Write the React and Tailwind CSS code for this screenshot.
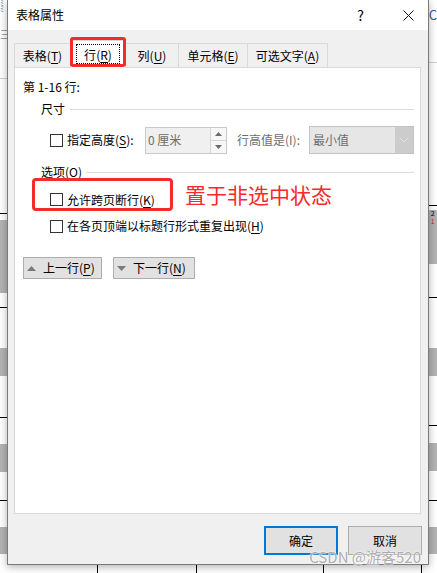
import React from 'react';

// Underlined access-key letter, like Windows dialogs draw it
const Key = ({ children }) => (
  <span className="underline underline-offset-[2px] decoration-1">{children}</span>
);

const Checkbox = () => (
  <span className="block w-[13px] h-[13px] shrink-0 border border-[#333333] bg-white" />
);

const tabs = [
  { label: '表格', key: 'T', w: 'w-[57px]' },
  { label: '行', key: 'R', w: 'w-[56px]', active: true },
  { label: '列', key: 'U', w: 'w-[54px]' },
  { label: '单元格', key: 'E', w: 'w-[70px]' },
  { label: '可选文字', key: 'A', w: 'w-[81px]' },
];

// document strips peeking out beside the dialog
const leftBands = [
  'h-px bg-[#cfcfcf]',
  'h-[134px]',
  'h-px bg-black',
  'h-[6px]',
  'h-[73px] bg-[#b3b3b3]',
  'h-[14px]',
  'h-px bg-black',
  'h-[40px]',
  'h-[28px] bg-[#b3b3b3]',
  'h-[41px]',
  'h-px bg-black',
  'h-[26px]',
  'h-[28px] bg-[#b3b3b3]',
  'h-[28px]',
  'h-px bg-black',
  'h-[26px]',
  'h-[27px] bg-[#b3b3b3]',
];

const rightTop = ['h-px bg-[#cfcfcf]', 'h-[142px]', 'h-px bg-black', 'h-[4px]'];

const rightBottom = [
  'h-[33px]',
  'h-px bg-black',
  'h-[50px]',
  'h-[28px] bg-[#b3b3b3]',
  'h-[49px]',
  'h-px bg-black',
  'h-[17px]',
  'h-[28px] bg-[#b3b3b3]',
  'h-[29px]',
  'h-px bg-black',
  'h-[26px]',
  'h-[27px] bg-[#b3b3b3]',
];

function SpinBox() {
  return (
    <div className="flex w-[82px] h-[27px] border border-[#c9c9c9] bg-[#f0f0f0]">
      <span className="flex-1 flex items-center pl-[2px] text-[#6d6d6d]">0 厘米</span>
      <div className="w-[16px] flex flex-col border-l border-[#d6d6d6]">
        <span className="flex-1 flex items-center justify-center border-b border-[#d6d6d6] bg-[#f7f7f7]">
          <svg width="7" height="4" viewBox="0 0 7 4"><path d="M0 4 L3.5 0 L7 4 Z" fill="#6a6a6a" /></svg>
        </span>
        <span className="flex-1 flex items-center justify-center bg-[#f7f7f7]">
          <svg width="7" height="4" viewBox="0 0 7 4"><path d="M0 0 L3.5 4 L7 0 Z" fill="#6a6a6a" /></svg>
        </span>
      </div>
    </div>
  );
}

function SelectBox() {
  return (
    <div className="flex w-[105px] h-[28px] border border-[#c4c4c4] bg-[#e6e6e6]">
      <span className="flex-1 flex items-center pl-[3px] text-[#6d6d6d]">最小值</span>
      <span className="w-[18px] flex items-center justify-center bg-[#cccccc]">
        <svg width="10" height="6" viewBox="0 0 10 6">
          <path d="M0.5 0.5 L5 5 L9.5 0.5" fill="none" stroke="#e2e2e2" strokeWidth="1" />
        </svg>
      </span>
    </div>
  );
}

function GroupTitle({ children, lineGap }) {
  return (
    <div className="flex items-center h-[14px] pl-[26px] pr-[6px]">
      <span className="leading-[14px]">{children}</span>
      <span className={`flex-1 h-px bg-[#dcdcdc] ${lineGap}`} />
    </div>
  );
}

function NavButton({ up, children, w }) {
  return (
    <button className={`flex items-center h-[22px] ${w} border border-[#adadad] bg-[#e1e1e1] pl-[3px] text-[12px]`}>
      <svg width="9" height="5" viewBox="0 0 9 5" className="mr-[7px]">
        {up ? <path d="M0 5 L4.5 0 L9 5 Z" fill="#7a7a7a" /> : <path d="M0 0 L4.5 5 L9 0 Z" fill="#7a7a7a" />}
      </svg>
      {children}
    </button>
  );
}

export default function App() {
  return (
    <div className="relative w-[437px] h-[573px] overflow-hidden bg-white text-[12px] text-black font-['Noto_Sans_CJK_SC',sans-serif]">
      {/* Word document behind the dialog */}
      <div className="flex h-full">
        <div className="w-[7px] flex flex-col">
          <div className="h-[12px] overflow-hidden text-[8px] leading-[6px] text-[#3f73b5]">ﾐﾐ</div>
          <div className="h-[16px]" />
          <div className="h-[12px] overflow-hidden text-[11px] leading-[12px] text-[#8a8a8a]">三</div>
          <div className="h-[38px]" />
          {leftBands.map((c, i) => (
            <div key={i} className={c} />
          ))}
        </div>
        <div className="w-[422px] flex flex-col">
          <div className="flex-1" />
          <div className="h-[8px] flex">
            <div className="w-[90px]" />
            <div className="w-px bg-black" />
            <div className="w-[98px]" />
            <div className="w-px bg-black" />
            <div className="w-[126px]" />
            <div className="w-px bg-black" />
            <div className="w-[97px]" />
            <div className="w-px bg-black" />
          </div>
        </div>
        <div className="flex-1 flex flex-col">
          <div className="h-[8px]" />
          <div className="h-[13px] overflow-hidden text-[13px] leading-[13px] text-[#2f5f9e] pl-[1px]">C</div>
          <div className="h-[41px]" />
          {rightTop.map((c, i) => (
            <div key={i} className={c} />
          ))}
          <div className="h-[54px] bg-[#b3b3b3] pl-[3px] text-[7px] leading-[7px]">
            <div className="h-[8px] overflow-hidden">2</div>
            <div className="h-[8px] overflow-hidden text-[#d42020]">1</div>
          </div>
          {rightBottom.map((c, i) => (
            <div key={i} className={c} />
          ))}
        </div>
      </div>

      {/* 表格属性 dialog */}
      <div className="absolute left-[7px] top-0 w-[422px] h-[565px] flex flex-col border-x border-b border-[#7a7a7a] bg-[#f0f0f0] shadow-[0_2px_8px_rgba(0,0,0,0.3)]">
        <div className="h-[30px] shrink-0 flex items-center bg-white pl-[8px]">
          <span>表格属性</span>
          <div className="ml-auto flex items-center gap-[6px]">
            <span className="w-[40px] text-center text-[14px] pr-[3px]">?</span>
            <span className="w-[40px] flex justify-center">
              <svg width="11" height="11" viewBox="0 0 11 11">
                <path d="M0.5 0.5 L10.5 10.5 M10.5 0.5 L0.5 10.5" stroke="#111" strokeWidth="1" />
              </svg>
            </span>
          </div>
        </div>

        <div className="flex flex-col pt-[10px]">
          <div className="flex items-end h-[27px] pl-[6px]">
            {tabs.map((t, i) =>
              t.active ? (
                <div
                  key={t.key}
                  className={`relative z-10 -ml-px -mb-px h-[28px] ${t.w} flex items-center justify-center bg-white border-x border-t border-[#d9d9d9]`}
                >
                  <span className="absolute left-[5px] top-[3px] right-[5px] bottom-[4px] border border-dotted border-black" />
                  <span>
                    {t.label}(<Key>{t.key}</Key>)
                  </span>
                  <span className="absolute -left-px -right-px -top-[4px] bottom-px border-[3px] border-[#f52a2a] rounded-[3px]" />
                </div>
              ) : (
                <div
                  key={t.key}
                  className={`${i ? '-ml-px' : ''} h-[24px] ${t.w} flex items-center justify-center border-x border-t border-[#d9d9d9] bg-[#f0f0f0]`}
                >
                  {t.label}(<Key>{t.key}</Key>)
                </div>
              )
            )}
          </div>

          <div className="ml-[6px] w-[407px] h-[447px] flex flex-col border border-[#d9d9d9] bg-white">
            <div className="mt-[12px] h-[14px] leading-[14px] pl-[8px]">第 1-16 行:</div>

            <div className="mt-[8px]">
              <GroupTitle lineGap="ml-[5px]">尺寸</GroupTitle>
            </div>

            <div className="mt-[10px] flex items-center pl-[35px]">
              <Checkbox />
              <span className="ml-[4px] w-[78px]">
                指定高度(<Key>S</Key>):
              </span>
              <SpinBox />
              <span className="ml-[10px] w-[72px] text-[#6d6d6d]">行高值是(I):</span>
              <SelectBox />
            </div>

            <div className="mt-[11px]">
              <GroupTitle lineGap="ml-[4px]">
                选项(<Key>O</Key>)
              </GroupTitle>
            </div>

            <div className="-mt-px flex items-center">
              <div className="ml-[17px] w-[141px] h-[33px] flex items-center pl-[15px] pt-[10px] border-[3px] border-[#f52a2a] rounded-[4px]">
                <Checkbox />
                <span className="ml-[4px] leading-[14px]">
                  允许跨页断行(<Key>K</Key>)
                </span>
              </div>
              <span className="ml-[12px] text-[21px] leading-none text-[#f52a2a]">置于非选中状态</span>
            </div>

            <div className="mt-[7px] h-[16px] flex items-center pl-[35px]">
              <Checkbox />
              <span className="ml-[4px]">
                在各页顶端以标题行形式重复出现(<Key>H</Key>)
              </span>
            </div>

            <div className="mt-[23px] flex items-center pl-[8px] gap-[11px]">
              <NavButton up w="w-[79px]">
                上一行(<Key>P</Key>)
              </NavButton>
              <NavButton w="w-[82px]">
                下一行(<Key>N</Key>)
              </NavButton>
            </div>
          </div>

          <div className="mt-[12px] flex justify-end gap-[10px] pr-[6px]">
            <button className="w-[74px] h-[29px] border-2 border-[#0078d7] bg-[#e1e1e1] text-[12px]">确定</button>
            <button className="w-[74px] h-[29px] border border-[#adadad] bg-[#e1e1e1] text-[12px]">取消</button>
          </div>
        </div>
      </div>

      <span className="absolute right-[16px] bottom-[9px] text-[15px] leading-[15px] text-[#a3a3a3]/90 [text-shadow:0_0_2px_#ffffff,0_0_1px_#ffffff]">
        CSDN @游客520
      </span>
    </div>
  );
}
